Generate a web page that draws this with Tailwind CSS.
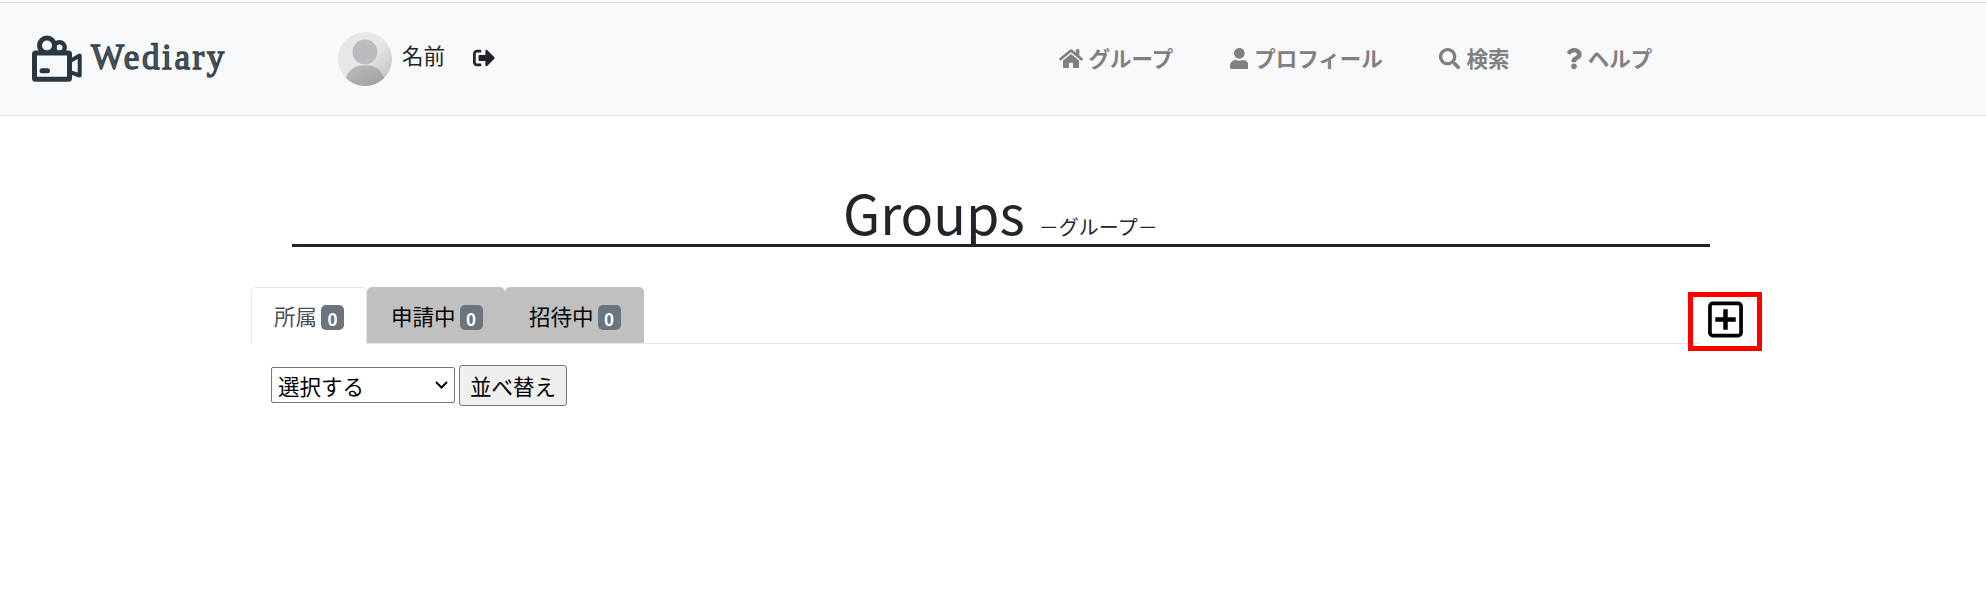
<!DOCTYPE html>
<html lang="ja">
<head>
<meta charset="utf-8">
<title>Wediary</title>
<script src="https://cdn.jsdelivr.net/npm/@tailwindcss/browser@4"></script>
</head>
<body class="h-[598px] overflow-hidden bg-white font-['Noto_Sans_CJK_JP',sans-serif] text-[21.5px] leading-[32px] text-[#212529]">
<header class="mt-[2px] flex h-[114px] items-start border-y border-[#dee2e6] bg-[#f8f9fa]">
  <a class="flex w-[305px] pl-[32px] pt-[32px] text-[#2b3740]">
    <svg class="h-[47px] w-[51px] shrink-0" viewBox="0 0 51 47" fill="none" stroke="currentColor" stroke-width="5">
      <circle cx="15" cy="10.5" r="7.5"/><circle cx="27.5" cy="12.5" r="5.2" stroke-width="4.4"/>
      <rect x="2.5" y="18" width="35" height="26.2" rx="1" fill="#f8f9fa"/>
      <path d="M10 35.7h5.500" stroke-linecap="round"/>
      <path d="M39 25.500 47.700 20.500v20L39 37.500" stroke-width="4" stroke-linejoin="round"/>
    </svg>
    <span class="ml-[8px] mt-[3px] h-[40px] text-[35px] leading-[40px] tracking-[2.6px] text-[#4d5963] font-['Liberation_Serif',serif] [-webkit-text-stroke:1.3px_#35414a]">Wediary</span>
  </a>
  <div class="ml-[33px] flex pt-[28px]">
    <svg class="mt-px h-[54px] w-[54px]" viewBox="0 0 54 54">
      <defs>
        <linearGradient id="bg" x1="0" y1="0" x2="1" y2="1"><stop offset=".5" stop-color="#e6e7e8"/><stop offset="1" stop-color="#b9bbbd"/></linearGradient>
        <linearGradient id="body" x1="0" y1="0" x2="1" y2="1"><stop stop-color="#bcbec0"/><stop offset="1" stop-color="#9b9da0"/></linearGradient>
        <clipPath id="round"><circle cx="27" cy="27" r="27"/></clipPath>
      </defs>
      <g clip-path="url(#round)"><rect width="54" height="54" fill="url(#bg)"/><path d="M7 54V48C10 38 17 33 27 33s17 5 20 15v6z" fill="url(#body)"/><circle cx="27" cy="20" r="13.500" fill="#e6e7e8"/><circle cx="27" cy="20" r="12.500" fill="#b9bbbe"/></g>
    </svg>
    <span class="ml-[10px] mt-[8px]">名前</span>
    <svg class="ml-[28px] mt-[16px] h-[22px] w-[22px]" viewBox="0 0 512 512" fill="currentColor"><path d="M497 273L329 441c-15 15-41 4.500-41-17v-96H152c-13.300 0-24-10.700-24-24v-96c0-13.300 10.700-24 24-24h136V88c0-21.400 25.900-32 41-17l168 168c9.300 9.400 9.300 24.600 0 34zM192 436v-40c0-6.600-5.400-12-12-12H96c-17.700 0-32-14.300-32-32V160c0-17.700 14.300-32 32-32h84c6.600 0 12-5.400 12-12V76c0-6.600-5.400-12-12-12H96c-53 0-96 43-96 96v192c0 53 43 96 96 96h84c6.600 0 12-5.400 12-12z"/></svg>
  </div>
  <nav class="ml-[563.5px] flex gap-[56.3px] pt-[39px] font-bold text-[#808080]">
    <a class="flex gap-[6px]">
      <svg class="mt-[6px] h-[21.330px] w-[24px]" viewBox="0 0 576 512" fill="currentColor"><path d="M280.370 148.260L96 300.110V464a16 16 0 0 0 16 16l112.060-.29a16 16 0 0 0 15.920-16V368a16 16 0 0 1 16-16h64a16 16 0 0 1 16 16v95.640a16 16 0 0 0 16 16.050L464 480a16 16 0 0 0 16-16V300L295.670 148.260a12.190 12.190 0 0 0-15.300 0zM571.600 251.470L488 182.560V44.050a12 12 0 0 0-12-12h-56a12 12 0 0 0-12 12v72.610L318.470 43a48 48 0 0 0-61 0L4.340 251.470a12 12 0 0 0-1.600 16.900l25.500 31A12 12 0 0 0 45.150 301l235.220-193.740a12.190 12.190 0 0 1 15.300 0L530.900 301a12 12 0 0 0 16.900-1.600l25.500-31a12 12 0 0 0-1.700-16.930z"/></svg>
      <span>グループ</span>
    </a>
    <a class="flex gap-[6px]">
      <svg class="mt-[6px] h-[21.330px] w-[18.700px]" viewBox="0 0 448 512" fill="currentColor"><path d="M224 256c70.700 0 128-57.300 128-128S294.700 0 224 0 96 57.300 96 128s57.300 128 128 128zm89.600 32h-16.700c-22.200 10.200-46.900 16-72.900 16s-50.600-5.800-72.900-16h-16.700C60.200 288 0 348.200 0 422.400V464c0 26.500 21.500 48 48 48h352c26.500 0 48-21.500 48-48v-41.600c0-74.200-60.200-134.400-134.400-134.400z"/></svg>
      <span>プロフィール</span>
    </a>
    <a class="flex gap-[6px]">
      <svg class="mt-[6px] h-[21.330px] w-[21.330px]" viewBox="0 0 512 512" fill="currentColor"><path d="M505 442.700L405.300 343c-4.500-4.500-10.600-7-17-7H372c27.600-35.300 44-79.700 44-128C416 93.100 322.900 0 208 0S0 93.100 0 208s93.100 208 208 208c48.300 0 92.700-16.400 128-44v16.300c0 6.400 2.500 12.500 7 17l99.700 99.700c9.400 9.400 24.600 9.400 33.900 0l28.300-28.300c9.400-9.400 9.400-24.600.1-34zM208 336c-70.700 0-128-57.200-128-128 0-70.700 57.200-128 128-128 70.700 0 128 57.200 128 128 0 70.700-57.200 128-128 128z"/></svg>
      <span>検索</span>
    </a>
    <a class="flex gap-[6px]">
      <svg class="mt-[6px] h-[21.330px] w-[16px]" viewBox="0 0 384 512" fill="currentColor"><path d="M202.021 0C122.202 0 70.503 32.703 29.914 91.026c-7.363 10.580-5.093 25.086 5.178 32.874l43.138 32.709c10.373 7.865 25.132 6.026 33.253-4.148 25.049-31.381 43.630-49.449 82.757-49.449 30.764 0 68.816 19.799 68.816 49.631 0 22.552-18.617 34.134-48.993 51.164-35.423 19.860-82.299 44.576-82.299 106.405V320c0 13.255 10.745 24 24 24h72.471c13.255 0 24-10.745 24-24v-5.773c0-42.860 125.268-44.645 125.268-160.627C377.504 66.256 286.902 0 202.021 0zM192 373.459c-38.196 0-69.271 31.075-69.271 69.271 0 38.195 31.075 69.270 69.271 69.270s69.271-31.075 69.271-69.271-31.075-69.270-69.271-69.270z"/></svg>
      <span>ヘルプ</span>
    </a>
  </nav>
</header>

<main>
  <div class="ml-[292px] mt-[60px] flex h-[70.5px] w-[1418px] items-baseline border-b-[3px] border-[#212529] pl-[551px]">
    <h1 class="text-[54px] leading-[71px]">Groups</h1>
    <small class="ml-[14px] text-[20px]">－グループ－</small>
  </div>

  <div class="ml-[251px] mt-[40.5px] flex h-[64px]">
    <div class="flex h-[57px] w-[1449px] border-b border-[#e4e7ea]">
      <a class="flex h-[57px] w-[116px] items-start rounded-t-[5px] border border-b-0 border-[#e4e7ea] bg-white pl-[22px] pt-[12px] text-[#495057]">所属<span class="ml-[4px] mt-[5px] flex h-[25px] w-[23px] items-center justify-center rounded-[5px] bg-[#6c757d] pt-px text-[17px] font-bold leading-none text-white">0</span></a>
      <a class="flex h-[56px] w-[138px] items-start rounded-t-[5px] bg-[#c0c0c0] pl-[24px] pt-[13px] text-black">申請中<span class="ml-[4px] mt-[5px] flex h-[25px] w-[23px] items-center justify-center rounded-[5px] bg-[#6c757d] pt-px text-[17px] font-bold leading-none text-white">0</span></a>
      <a class="flex h-[56px] w-[139px] items-start rounded-t-[5px] bg-[#c0c0c0] pl-[24px] pt-[13px] text-black">招待中<span class="ml-[4px] mt-[5px] flex h-[25px] w-[23px] items-center justify-center rounded-[5px] bg-[#6c757d] pt-px text-[17px] font-bold leading-none text-white">0</span></a>
    </div>
    <button class="-ml-[12px] mt-[5px] flex h-[59px] w-[74px] items-start border-[5px] border-[#ff0000] pl-[15px] pt-[4px] text-black">
      <svg class="h-[37px] w-[35px]" viewBox="0 0 36 37" fill="none" stroke="currentColor"><rect x="2" y="2" width="32" height="33" rx="3" stroke-width="3.800"/><path d="M18 8v21M7.500 18.500h21" stroke-width="4.600"/></svg>
    </button>
  </div>

  <form class="ml-[271px] mt-[14px] flex items-center gap-[4px] text-black">
    <div class="mb-px flex h-[36px] w-[184px] items-center justify-between rounded-[2px] border border-[#767676] bg-white pl-[6px] pr-[6px]">
      <span class="mt-[2px]">選択する</span>
      <svg class="h-[8px] w-[13px]" viewBox="0 0 13 8" fill="none" stroke="currentColor" stroke-width="2"><path d="M1 1l5.500 5.500L12 1"/></svg>
    </div>
    <button type="button" class="h-[41px] w-[108px] rounded-[3px] border border-[#767676] bg-[#efefef] pt-px">並べ替え</button>
  </form>
</main>
</body>
</html>
